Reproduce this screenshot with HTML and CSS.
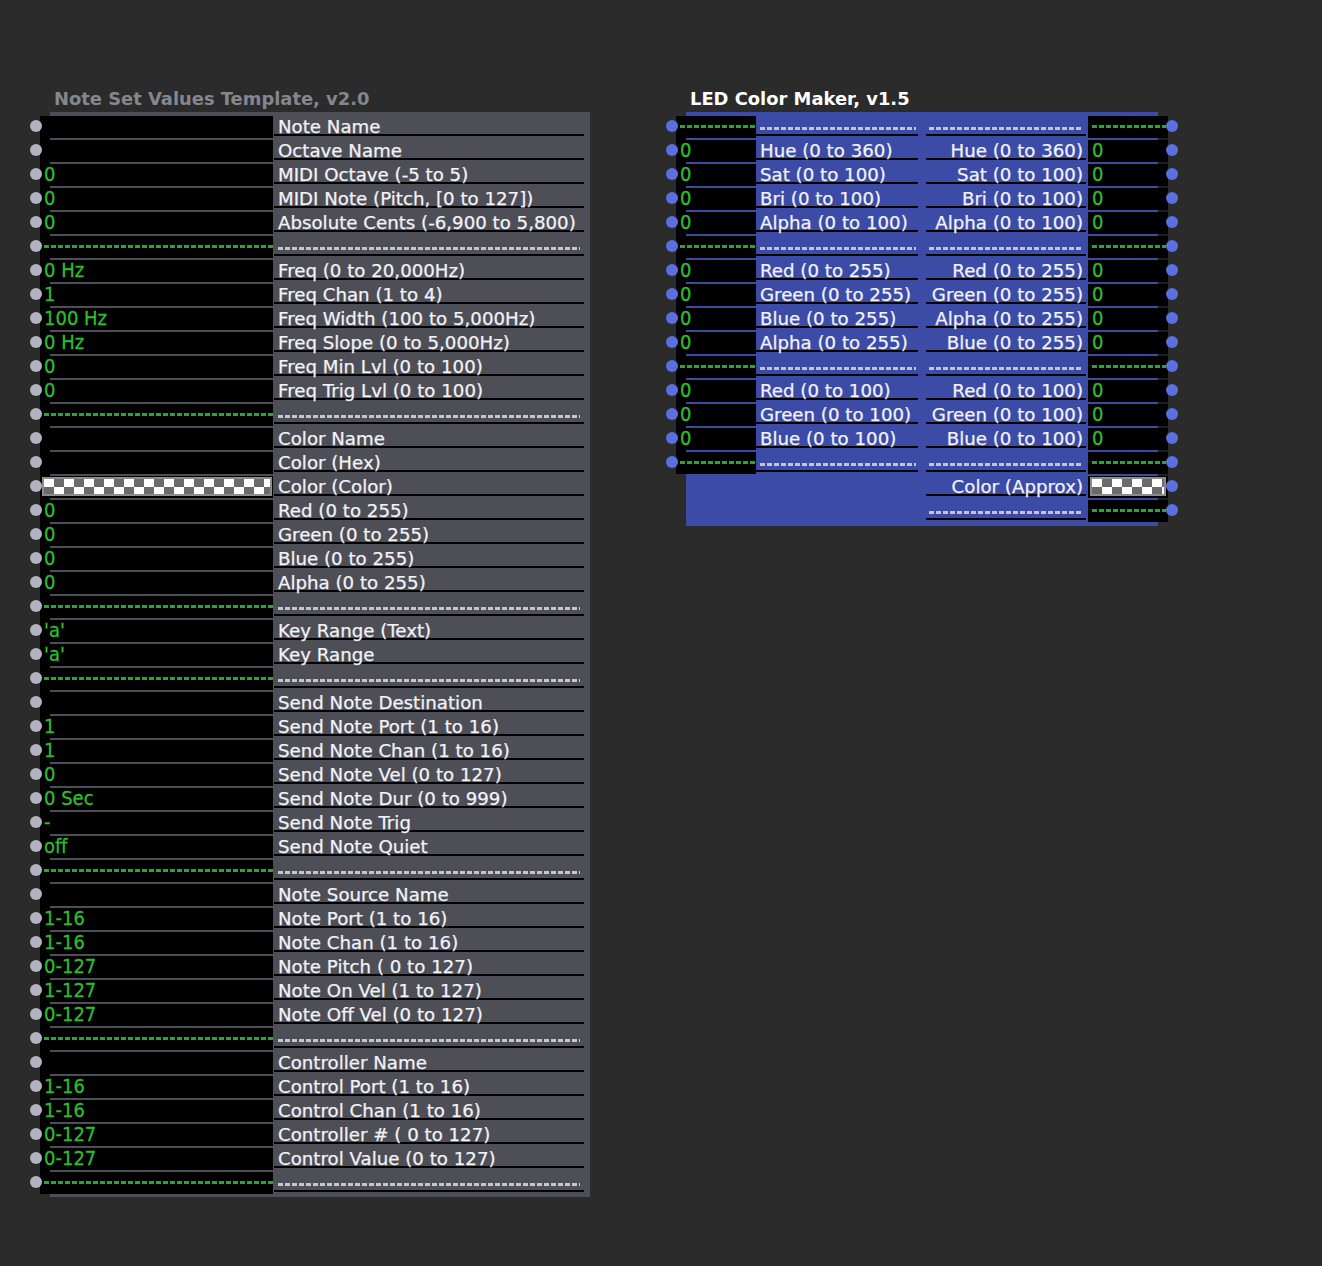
FILE: index.html
```html
<!DOCTYPE html>
<html>
<head>
<meta charset="utf-8">
<title>Note Set Values Template / LED Color Maker</title>
<link rel="stylesheet" href="styles.css">
</head>
<body>
<div class="canvas">
  <section class="module">
    <div class="title title-gray">Note Set Values Template, v2.0</div>
    <div class="panel panel-gray">
      <div class="rows rows-left">
        <div class="row"><i class="dot dot-g"></i><div class="val val-l"></div><div class="lab lab-l"><div class="lab-in">Note Name</div></div></div>
        <div class="row"><i class="dot dot-g"></i><div class="val val-l"></div><div class="lab lab-l"><div class="lab-in">Octave Name</div></div></div>
        <div class="row"><i class="dot dot-g"></i><div class="val val-l">0</div><div class="lab lab-l"><div class="lab-in">MIDI Octave (-5 to 5)</div></div></div>
        <div class="row"><i class="dot dot-g"></i><div class="val val-l">0</div><div class="lab lab-l"><div class="lab-in">MIDI Note (Pitch, [0 to 127])</div></div></div>
        <div class="row"><i class="dot dot-g"></i><div class="val val-l">0</div><div class="lab lab-l"><div class="lab-in">Absolute Cents (-6,900 to 5,800)</div></div></div>
        <div class="row"><i class="dot dot-g"></i><div class="val val-l"><div class="gdash"></div></div><div class="lab lab-l"><div class="lab-in"><div class="ldash"></div></div></div></div>
        <div class="row"><i class="dot dot-g"></i><div class="val val-l">0 Hz</div><div class="lab lab-l"><div class="lab-in">Freq (0 to 20,000Hz)</div></div></div>
        <div class="row"><i class="dot dot-g"></i><div class="val val-l">1</div><div class="lab lab-l"><div class="lab-in">Freq Chan (1 to 4)</div></div></div>
        <div class="row"><i class="dot dot-g"></i><div class="val val-l">100 Hz</div><div class="lab lab-l"><div class="lab-in">Freq Width (100 to 5,000Hz)</div></div></div>
        <div class="row"><i class="dot dot-g"></i><div class="val val-l">0 Hz</div><div class="lab lab-l"><div class="lab-in">Freq Slope (0 to 5,000Hz)</div></div></div>
        <div class="row"><i class="dot dot-g"></i><div class="val val-l">0</div><div class="lab lab-l"><div class="lab-in">Freq Min Lvl (0 to 100)</div></div></div>
        <div class="row"><i class="dot dot-g"></i><div class="val val-l">0</div><div class="lab lab-l"><div class="lab-in">Freq Trig Lvl (0 to 100)</div></div></div>
        <div class="row"><i class="dot dot-g"></i><div class="val val-l"><div class="gdash"></div></div><div class="lab lab-l"><div class="lab-in"><div class="ldash"></div></div></div></div>
        <div class="row"><i class="dot dot-g"></i><div class="val val-l"></div><div class="lab lab-l"><div class="lab-in">Color Name</div></div></div>
        <div class="row"><i class="dot dot-g"></i><div class="val val-l"></div><div class="lab lab-l"><div class="lab-in">Color (Hex)</div></div></div>
        <div class="row"><i class="dot dot-g"></i><div class="val val-l"><div class="chk chk-l"></div></div><div class="lab lab-l"><div class="lab-in">Color (Color)</div></div></div>
        <div class="row"><i class="dot dot-g"></i><div class="val val-l">0</div><div class="lab lab-l"><div class="lab-in">Red (0 to 255)</div></div></div>
        <div class="row"><i class="dot dot-g"></i><div class="val val-l">0</div><div class="lab lab-l"><div class="lab-in">Green (0 to 255)</div></div></div>
        <div class="row"><i class="dot dot-g"></i><div class="val val-l">0</div><div class="lab lab-l"><div class="lab-in">Blue (0 to 255)</div></div></div>
        <div class="row"><i class="dot dot-g"></i><div class="val val-l">0</div><div class="lab lab-l"><div class="lab-in">Alpha (0 to 255)</div></div></div>
        <div class="row"><i class="dot dot-g"></i><div class="val val-l"><div class="gdash"></div></div><div class="lab lab-l"><div class="lab-in"><div class="ldash"></div></div></div></div>
        <div class="row"><i class="dot dot-g"></i><div class="val val-l">'a'</div><div class="lab lab-l"><div class="lab-in">Key Range (Text)</div></div></div>
        <div class="row"><i class="dot dot-g"></i><div class="val val-l">'a'</div><div class="lab lab-l"><div class="lab-in">Key Range</div></div></div>
        <div class="row"><i class="dot dot-g"></i><div class="val val-l"><div class="gdash"></div></div><div class="lab lab-l"><div class="lab-in"><div class="ldash"></div></div></div></div>
        <div class="row"><i class="dot dot-g"></i><div class="val val-l"></div><div class="lab lab-l"><div class="lab-in">Send Note Destination</div></div></div>
        <div class="row"><i class="dot dot-g"></i><div class="val val-l">1</div><div class="lab lab-l"><div class="lab-in">Send Note Port (1 to 16)</div></div></div>
        <div class="row"><i class="dot dot-g"></i><div class="val val-l">1</div><div class="lab lab-l"><div class="lab-in">Send Note Chan (1 to 16)</div></div></div>
        <div class="row"><i class="dot dot-g"></i><div class="val val-l">0</div><div class="lab lab-l"><div class="lab-in">Send Note Vel (0 to 127)</div></div></div>
        <div class="row"><i class="dot dot-g"></i><div class="val val-l">0 Sec</div><div class="lab lab-l"><div class="lab-in">Send Note Dur (0 to 999)</div></div></div>
        <div class="row"><i class="dot dot-g"></i><div class="val val-l">-</div><div class="lab lab-l"><div class="lab-in">Send Note Trig</div></div></div>
        <div class="row"><i class="dot dot-g"></i><div class="val val-l">off</div><div class="lab lab-l"><div class="lab-in">Send Note Quiet</div></div></div>
        <div class="row"><i class="dot dot-g"></i><div class="val val-l"><div class="gdash"></div></div><div class="lab lab-l"><div class="lab-in"><div class="ldash"></div></div></div></div>
        <div class="row"><i class="dot dot-g"></i><div class="val val-l"></div><div class="lab lab-l"><div class="lab-in">Note Source Name</div></div></div>
        <div class="row"><i class="dot dot-g"></i><div class="val val-l">1-16</div><div class="lab lab-l"><div class="lab-in">Note Port (1 to 16)</div></div></div>
        <div class="row"><i class="dot dot-g"></i><div class="val val-l">1-16</div><div class="lab lab-l"><div class="lab-in">Note Chan (1 to 16)</div></div></div>
        <div class="row"><i class="dot dot-g"></i><div class="val val-l">0-127</div><div class="lab lab-l"><div class="lab-in">Note Pitch ( 0 to 127)</div></div></div>
        <div class="row"><i class="dot dot-g"></i><div class="val val-l">1-127</div><div class="lab lab-l"><div class="lab-in">Note On Vel (1 to 127)</div></div></div>
        <div class="row"><i class="dot dot-g"></i><div class="val val-l">0-127</div><div class="lab lab-l"><div class="lab-in">Note Off Vel (0 to 127)</div></div></div>
        <div class="row"><i class="dot dot-g"></i><div class="val val-l"><div class="gdash"></div></div><div class="lab lab-l"><div class="lab-in"><div class="ldash"></div></div></div></div>
        <div class="row"><i class="dot dot-g"></i><div class="val val-l"></div><div class="lab lab-l"><div class="lab-in">Controller Name</div></div></div>
        <div class="row"><i class="dot dot-g"></i><div class="val val-l">1-16</div><div class="lab lab-l"><div class="lab-in">Control Port (1 to 16)</div></div></div>
        <div class="row"><i class="dot dot-g"></i><div class="val val-l">1-16</div><div class="lab lab-l"><div class="lab-in">Control Chan (1 to 16)</div></div></div>
        <div class="row"><i class="dot dot-g"></i><div class="val val-l">0-127</div><div class="lab lab-l"><div class="lab-in">Controller # ( 0 to 127)</div></div></div>
        <div class="row"><i class="dot dot-g"></i><div class="val val-l">0-127</div><div class="lab lab-l"><div class="lab-in">Control Value (0 to 127)</div></div></div>
        <div class="row"><i class="dot dot-g"></i><div class="val val-l val-last"><div class="gdash"></div></div><div class="lab lab-l"><div class="lab-in"><div class="ldash"></div></div></div></div>
      </div>
    </div>
  </section>

  <section class="module">
    <div class="title title-white">LED Color Maker, v1.5</div>
    <div class="panel panel-blue">
      <div class="rows rows-right">
        <div class="row"><i class="dot dot-b dot-in"></i><div class="val val-s"><div class="gdash"></div></div><div class="lab lab-rl"><div class="lab-in"><div class="ldash"></div></div></div><div class="sp"></div><div class="lab lab-rr"><div class="lab-in"><div class="ldash"></div></div></div><div class="val val-s val-r"><div class="gdash gdash-r"></div></div><i class="dot dot-b dot-out"></i></div>
        <div class="row"><i class="dot dot-b dot-in"></i><div class="val val-s">0</div><div class="lab lab-rl"><div class="lab-in">Hue (0 to 360)</div></div><div class="sp"></div><div class="lab lab-rr"><div class="lab-in">Hue (0 to 360)</div></div><div class="val val-s val-r">0</div><i class="dot dot-b dot-out"></i></div>
        <div class="row"><i class="dot dot-b dot-in"></i><div class="val val-s">0</div><div class="lab lab-rl"><div class="lab-in">Sat (0 to 100)</div></div><div class="sp"></div><div class="lab lab-rr"><div class="lab-in">Sat (0 to 100)</div></div><div class="val val-s val-r">0</div><i class="dot dot-b dot-out"></i></div>
        <div class="row"><i class="dot dot-b dot-in"></i><div class="val val-s">0</div><div class="lab lab-rl"><div class="lab-in">Bri (0 to 100)</div></div><div class="sp"></div><div class="lab lab-rr"><div class="lab-in">Bri (0 to 100)</div></div><div class="val val-s val-r">0</div><i class="dot dot-b dot-out"></i></div>
        <div class="row"><i class="dot dot-b dot-in"></i><div class="val val-s">0</div><div class="lab lab-rl"><div class="lab-in">Alpha (0 to 100)</div></div><div class="sp"></div><div class="lab lab-rr"><div class="lab-in">Alpha (0 to 100)</div></div><div class="val val-s val-r">0</div><i class="dot dot-b dot-out"></i></div>
        <div class="row"><i class="dot dot-b dot-in"></i><div class="val val-s"><div class="gdash"></div></div><div class="lab lab-rl"><div class="lab-in"><div class="ldash"></div></div></div><div class="sp"></div><div class="lab lab-rr"><div class="lab-in"><div class="ldash"></div></div></div><div class="val val-s val-r"><div class="gdash gdash-r"></div></div><i class="dot dot-b dot-out"></i></div>
        <div class="row"><i class="dot dot-b dot-in"></i><div class="val val-s">0</div><div class="lab lab-rl"><div class="lab-in">Red (0 to 255)</div></div><div class="sp"></div><div class="lab lab-rr"><div class="lab-in">Red (0 to 255)</div></div><div class="val val-s val-r">0</div><i class="dot dot-b dot-out"></i></div>
        <div class="row"><i class="dot dot-b dot-in"></i><div class="val val-s">0</div><div class="lab lab-rl"><div class="lab-in">Green (0 to 255)</div></div><div class="sp"></div><div class="lab lab-rr"><div class="lab-in">Green (0 to 255)</div></div><div class="val val-s val-r">0</div><i class="dot dot-b dot-out"></i></div>
        <div class="row"><i class="dot dot-b dot-in"></i><div class="val val-s">0</div><div class="lab lab-rl"><div class="lab-in">Blue (0 to 255)</div></div><div class="sp"></div><div class="lab lab-rr"><div class="lab-in">Alpha (0 to 255)</div></div><div class="val val-s val-r">0</div><i class="dot dot-b dot-out"></i></div>
        <div class="row"><i class="dot dot-b dot-in"></i><div class="val val-s">0</div><div class="lab lab-rl"><div class="lab-in">Alpha (0 to 255)</div></div><div class="sp"></div><div class="lab lab-rr"><div class="lab-in">Blue (0 to 255)</div></div><div class="val val-s val-r">0</div><i class="dot dot-b dot-out"></i></div>
        <div class="row"><i class="dot dot-b dot-in"></i><div class="val val-s"><div class="gdash"></div></div><div class="lab lab-rl"><div class="lab-in"><div class="ldash"></div></div></div><div class="sp"></div><div class="lab lab-rr"><div class="lab-in"><div class="ldash"></div></div></div><div class="val val-s val-r"><div class="gdash gdash-r"></div></div><i class="dot dot-b dot-out"></i></div>
        <div class="row"><i class="dot dot-b dot-in"></i><div class="val val-s">0</div><div class="lab lab-rl"><div class="lab-in">Red (0 to 100)</div></div><div class="sp"></div><div class="lab lab-rr"><div class="lab-in">Red (0 to 100)</div></div><div class="val val-s val-r">0</div><i class="dot dot-b dot-out"></i></div>
        <div class="row"><i class="dot dot-b dot-in"></i><div class="val val-s">0</div><div class="lab lab-rl"><div class="lab-in">Green (0 to 100)</div></div><div class="sp"></div><div class="lab lab-rr"><div class="lab-in">Green (0 to 100)</div></div><div class="val val-s val-r">0</div><i class="dot dot-b dot-out"></i></div>
        <div class="row"><i class="dot dot-b dot-in"></i><div class="val val-s">0</div><div class="lab lab-rl"><div class="lab-in">Blue (0 to 100)</div></div><div class="sp"></div><div class="lab lab-rr"><div class="lab-in">Blue (0 to 100)</div></div><div class="val val-s val-r">0</div><i class="dot dot-b dot-out"></i></div>
        <div class="row"><i class="dot dot-b dot-in"></i><div class="val val-s val-last"><div class="gdash"></div></div><div class="lab lab-rl"><div class="lab-in"><div class="ldash"></div></div></div><div class="sp"></div><div class="lab lab-rr"><div class="lab-in"><div class="ldash"></div></div></div><div class="val val-s val-r"><div class="gdash gdash-r"></div></div><i class="dot dot-b dot-out"></i></div>
        <div class="row"><div class="blank"></div><div class="lab lab-rr"><div class="lab-in">Color (Approx)</div></div><div class="val val-s val-r"><div class="chk chk-r"></div></div><i class="dot dot-b dot-out"></i></div>
        <div class="row"><div class="blank"></div><div class="lab lab-rr"><div class="lab-in"><div class="ldash"></div></div></div><div class="val val-s val-r val-last"><div class="gdash gdash-r"></div></div><i class="dot dot-b dot-out"></i></div>
      </div>
    </div>
  </section>
</div>
</body>
</html>
```

FILE: styles.css
```css
* { box-sizing: border-box; }

html, body {
  margin: 0;
  background: #2b2b2b;
}

body {
  width: 1322px;
  height: 1266px;
  overflow: hidden;
  font-family: "DejaVu Sans", Verdana, sans-serif;
}

.canvas {
  display: flex;
  align-items: flex-start;
  gap: 76px;
  padding: 89px 0 0 30px;
}

.module {
  display: flex;
  flex-direction: column;
}

.title {
  font-weight: bold;
  font-size: 17.9px;
  line-height: 20px;
  height: 20px;
  margin: 0 0 3px 24px;
  white-space: nowrap;
}
.title-gray { color: #86868e; }
.title-white { color: #ffffff; }

.panel {
  margin-left: 20px;
  padding-top: 4px;
}
.panel-gray {
  background: #4e4e56;
  width: 540px;
  padding-bottom: 1px;
}
.panel-blue {
  background: #3b4ba6;
  width: 472px;
  padding-bottom: 2px;
}

.rows {
  margin-left: -20px;
  display: flex;
  flex-direction: column;
}
.rows-left { width: 560px; }
.rows-right { width: 512px; }

.row {
  display: flex;
  height: 24px;
}

.dot {
  display: block;
  flex: none;
  width: 12px;
  height: 12px;
  margin-top: 4px;
  border-radius: 50%;
  position: relative;
  z-index: 1;
}
.dot-g { background: #b2b2c0; margin-right: -2px; }
.dot-b { background: #5b6fe0; }
.dot-in { margin-right: -2px; }
.dot-out { margin-left: -2px; }

.val {
  flex: none;
  height: 24px;
  padding: 0 0 0 4px;
  background:
    linear-gradient(#000, #000) 0 0 / 10px 100% no-repeat,
    linear-gradient(#000, #000) 0 0 / 100% 22px no-repeat;
  color: #2ebd2e;
  font-family: "DejaVu Sans Condensed", "DejaVu Sans", sans-serif;
  font-size: 20px;
  line-height: 20px;
  -webkit-text-stroke: 0.3px #2ebd2e;
  white-space: nowrap;
}
.val-l { width: 233px; }
.val-s { width: 80px; }
.val-r {
  background:
    linear-gradient(#1f1f1f, #1f1f1f) right 0 top 22px / 10px 2px no-repeat,
    linear-gradient(#000, #000) 0 0 / 100% 22px no-repeat;
}
.val.val-last {
  background: linear-gradient(#000, #000) 0 0 / 100% 22px no-repeat;
}

.gdash {
  height: 3px;
  margin-top: 9px;
  background: repeating-linear-gradient(90deg, #2aa82a 0 5px, transparent 5px 7px);
}
.gdash-r { margin-right: 2px; }

.chk {
  height: 19px;
  margin: 1px 0 0 -2px;
  border: 2px solid #8c8c8c;
  background: repeating-conic-gradient(#6b6b6b 0 25%, #ffffff 0 50%) 0 0 / 20px 16px;
}
.chk-l { width: 230px; }
.chk-r { width: 76px; }

.lab {
  flex: none;
  height: 24px;
  color: #f2f2f8;
  font-size: 18.2px;
  -webkit-text-stroke: 0.25px #f2f2f8;
  white-space: nowrap;
}
.lab-in {
  display: flow-root;
  height: 20px;
  border-bottom: 2px solid #000;
  line-height: 22px;
}
.lab-l { width: 317px; padding: 0 6px 0 1px; }
.lab-l .lab-in { padding: 0 4px 0 4px; }

.lab-rl { width: 162px; }
.lab-rl .lab-in { padding: 0 2px 0 4px; }

.lab-rr { width: 162px; padding-right: 2px; }
.lab-rr .lab-in { padding: 0 3px 0 3px; text-align: right; }

.sp { flex: none; width: 8px; }
.blank { flex: none; width: 260px; }

.ldash {
  height: 3px;
  margin-top: 11px;
  background: repeating-linear-gradient(90deg, #c4c4d2 0 5px, transparent 5px 7px);
}
```
